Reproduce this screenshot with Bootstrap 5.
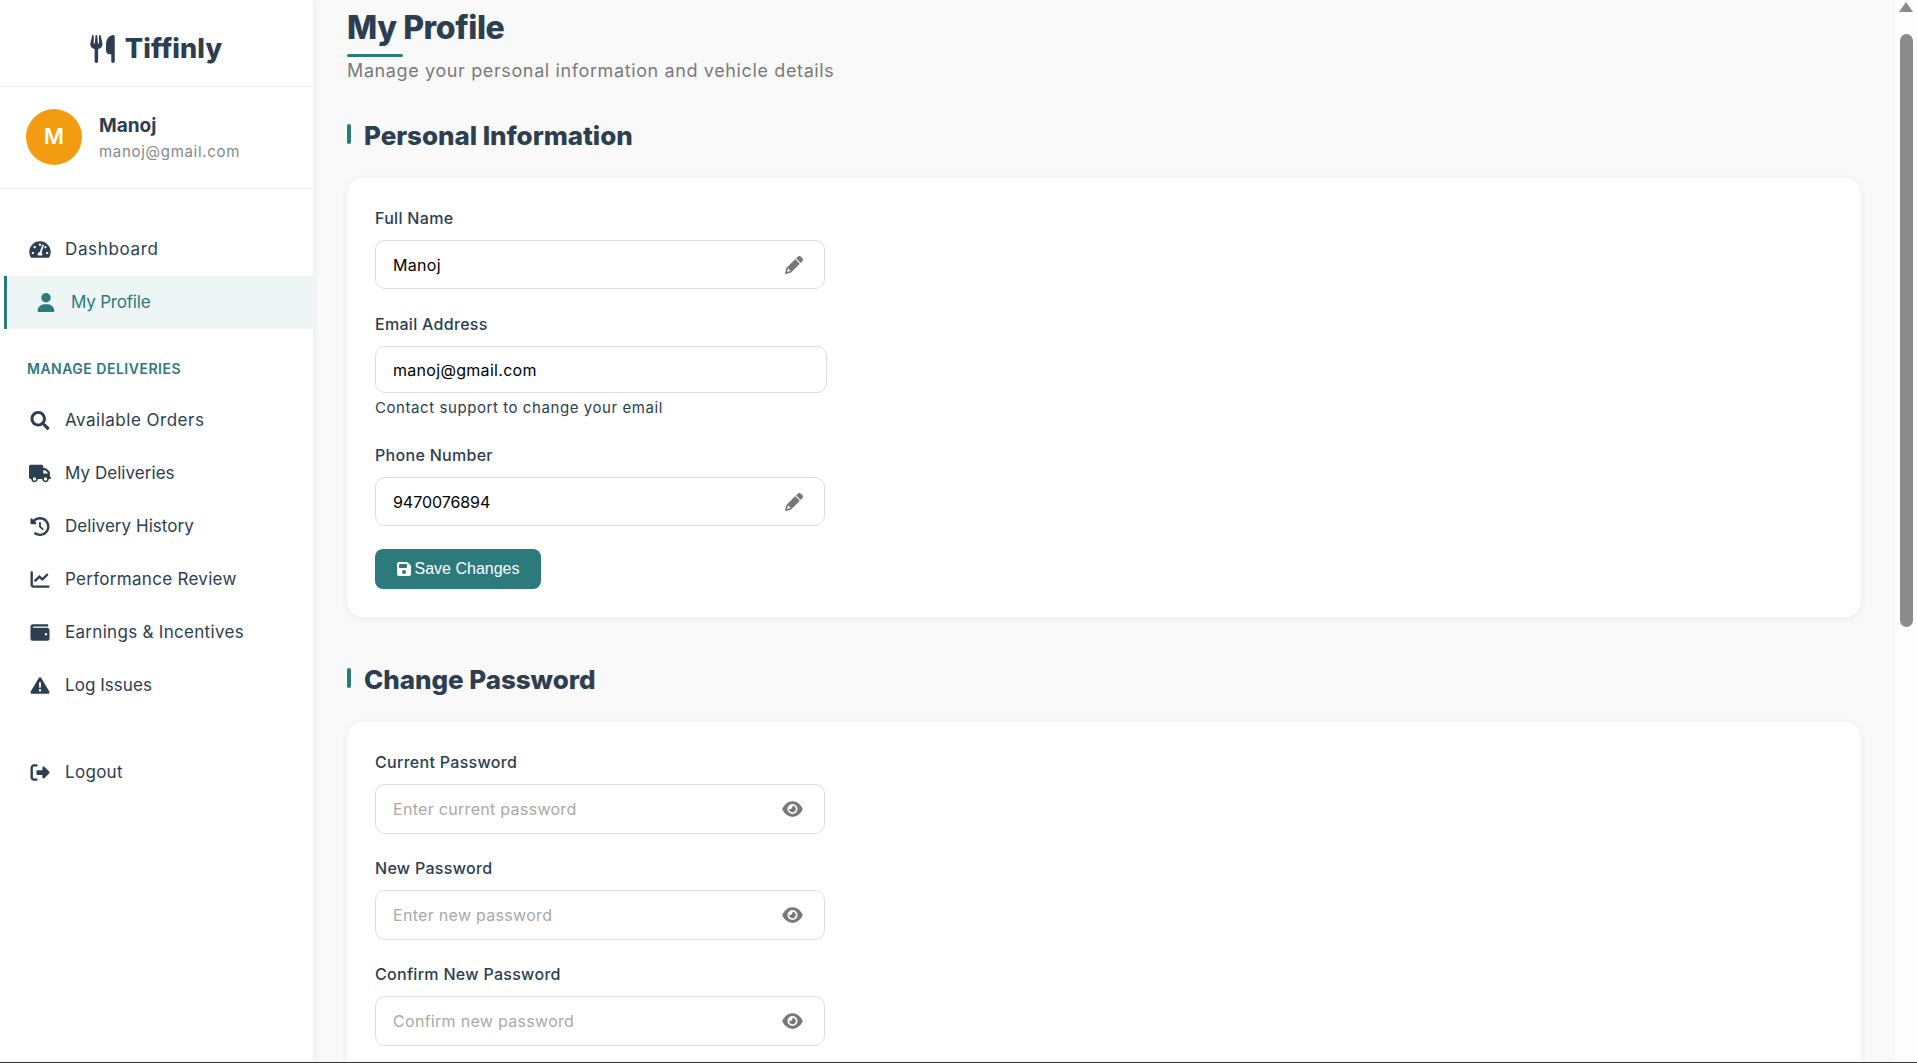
<!DOCTYPE html>
<html lang="en">

<head>
    <meta charset="UTF-8">
    <meta name="viewport" content="width=device-width, initial-scale=1.0">
    <title>My Profile - Tiffinly</title>
    <link rel="stylesheet" href="https://cdn.jsdelivr.net/npm/bootstrap@5.3.2/dist/css/bootstrap.min.css">
    <style>
        html, body { height: 100%; overflow: hidden; }
        body { font-family: Inter, "Open Sans", sans-serif; background: #f9f9f9; color: #2c3e50; }
        svg { fill: currentColor; display: block; }
        .app-shell { height: 1063px; border-bottom: 1px solid #333; overflow: hidden; }

        /* sidebar */
        .side-bar { width: 313px; flex: none; background: #fff; box-shadow: 2px 0 8px rgba(0, 0, 0, .05); position: relative; }
        .brand-row { height: 87px; border-bottom: 1px solid #eee; padding: 12px 1px 0 0; gap: 10px; }
        .brand-row svg { width: 25px; height: 28px; }
        .brand-name { font-size: 27px; font-weight: 800; letter-spacing: .1px; }
        .user-row { height: 102px; border-bottom: 1px solid #eee; padding-left: 26px; gap: 17px; }
        .user-pic { width: 56px; height: 56px; margin-top: -2px; background: #f39c12; font-size: 22px; font-weight: 600; }
        .user-info { margin-top: 2px; }
        .user-name { font-size: 19px; font-weight: 700; line-height: 26px; }
        .user-mail { font-size: 15px; line-height: 26px; color: #7f8c8d; letter-spacing: .7px; }
        .side-nav { padding-top: 34px; }
        .side-link { height: 53px; padding-left: 29px; color: #2c3e50; font-size: 17px; gap: 14px; letter-spacing: .3px; }
        .side-link svg { width: 22px; height: 19px; flex: none; }
        .side-link.is-on { margin-left: 4px; border-left: 3px solid #2c7a7b; background: #edf6f5; color: #2c7a7b; padding-left: 28px; letter-spacing: -.2px; }
        .side-link.sp-a { letter-spacing: .65px; }
        .side-link.sp-b { letter-spacing: .5px; }
        .side-link.sp-c { letter-spacing: .05px; }
        .side-head { margin: 29px 0 15px 27px; font-size: 14px; line-height: 21px; font-weight: 600; letter-spacing: .5px; color: #2c7a7b; text-transform: uppercase; }
        .side-out { margin-top: 34px; }

        /* main */
        .main-area { min-width: 0; padding: 4px 34px 0; }
        .page-title { font-size: 32px; line-height: 48px; font-weight: 800; margin: 0; letter-spacing: -.4px; }
        .title-rule { width: 56px; height: 3px; margin-top: 2px; background: #2c7a7b; border-radius: 2px; }
        .page-sub { font-size: 18px; line-height: 27px; color: #7a7a7a; margin: 0; letter-spacing: .62px; }
        .block-head { height: 38px; margin: 33px 0 23px; }
        .block-second { margin-top: 44px; }
        .block-bar { width: 4px; height: 20px; background: #2c7a7b; border-radius: 2px; margin: -4px 13px 0 0; }
        .block-title { font-size: 26px; font-weight: 800; margin: 0; letter-spacing: -.05px; }
        .form-panel { background: #fff; border: 0; border-radius: 16px; box-shadow: 0 2px 8px rgba(0, 0, 0, .06); padding: 28px; }
        .field-row { margin-bottom: 24px; }
        .field-row.first-row { margin-bottom: 23px; }
        .form-panel.pw-panel .field-row { margin-bottom: 22px; }
        .field-label { display: block; font-size: 16px; line-height: 24px; font-weight: 500; margin-bottom: 10px; letter-spacing: .3px; }
        .field-box { width: 450px; }
        .field-box.wide { width: 452px; }
        .form-control.field-input { height: 49px; padding: 0 44px 0 17px; font-size: 16px; color: #000; border: 1px solid #ddd; border-radius: 10px; letter-spacing: .3px; }
        .form-control.field-input.num-input { letter-spacing: -.06px; }
        .wide .form-control.field-input { height: 47px; }
        .pw-panel .form-control.field-input { height: 50px; }
        .form-control.field-input::placeholder { color: #a9a9a9; opacity: 1; }
        .field-icon { top: 50%; right: 22px; transform: translateY(-50%); color: #777; }
        .field-icon.pen { width: 18px; height: 18px; }
        .field-icon.see { width: 21px; height: 18px; }
        .field-note { font-size: 15px; line-height: 22px; margin-top: 4px; letter-spacing: .57px; }
        .btn.save-btn { height: 40px; width: 166px; padding: 0; margin-top: -1px; border: 0; border-radius: 8px; background: #2c7a7b; color: #fff; font-family: "Liberation Sans", Arial, sans-serif; font-size: 16px; gap: 4px; }
        .save-btn svg { width: 14px; height: 16px; }

        /* scrollbar drawn by hand, screenshots hide the real one */
        .scroll-col { width: 22px; flex: none; background: #fdfdfd; }
        .scroll-up { width: 0; height: 0; margin-top: 2px; border-left: 7.5px solid transparent; border-right: 7.5px solid transparent; border-bottom: 10px solid #8b8b8b; }
        .scroll-thumb { width: 13px; height: 593px; margin-top: 22px; margin-left: 1px; background: #8b8b8b; border-radius: 7px; }
    </style>
</head>

<body>
    <svg width="0" height="0" class="position-absolute">
        <symbol id="i-utensils" viewBox="0 0 448 512"><path d="M416 0C400 0 288 32 288 176V288c0 35.3 28.7 64 64 64h32V480c0 17.7 14.3 32 32 32s32-14.3 32-32V352 240 32c0-17.7-14.3-32-32-32zM64 16C64 7.8 57.9 1 49.7 .1S34.2 4.6 32.4 12.5L2.1 148.8C.7 155.1 0 161.5 0 167.9c0 45.9 35.1 83.6 80 87.7V480c0 17.7 14.3 32 32 32s32-14.3 32-32V255.6c44.9-4.1 80-41.8 80-87.7c0-6.4-.7-12.8-2.1-19.1L191.6 12.5c-1.8-8-9.3-13.3-17.4-12.4S160 7.8 160 16V150.2c0 5.4-4.4 9.8-9.8 9.8c-5.1 0-9.3-3.9-9.8-9L127.9 14.6C127.2 6.3 120.3 0 112 0s-15.2 6.3-15.9 14.6L83.7 151c-.5 5.1-4.7 9-9.8 9c-5.4 0-9.8-4.4-9.8-9.8V16zm48.3 152l-.3 0-.3 0 .3-.7 .3 .7z"/></symbol>
        <symbol id="i-gauge" viewBox="0 0 576 512"><path d="M288 32C128.94 32 0 160.94 0 320c0 52.8 14.25 102.26 39.06 144.8 5.61 9.62 16.3 15.2 27.44 15.2h443c11.14 0 21.83-5.58 27.44-15.2C561.75 422.26 576 372.8 576 320c0-159.06-128.94-288-288-288zm0 64c14.71 0 26.58 10.13 30.32 23.65-1.11 2.26-2.64 4.23-3.45 6.67l-9.22 27.67c-5.13 3.49-10.97 6.01-17.64 6.01-17.67 0-32-14.33-32-32S270.33 96 288 96zM96 384c-17.67 0-32-14.33-32-32s14.33-32 32-32 32 14.33 32 32-14.33 32-32 32zm48-160c-17.67 0-32-14.33-32-32s14.33-32 32-32 32 14.33 32 32-14.33 32-32 32zm246.77-72.41l-61.33 184C343.13 347.33 352 364.54 352 384c0 11.72-3.38 22.55-8.88 32H232.88c-5.5-9.45-8.88-20.28-8.88-32 0-33.94 26.5-61.43 59.9-63.59l61.34-184.01c4.17-12.56 17.73-19.45 30.36-15.17 12.57 4.19 19.35 17.79 15.17 30.36zm14.66 57.2l15.52-46.55c3.47-1.29 7.13-2.23 11.05-2.23 17.67 0 32 14.33 32 32s-14.33 32-32 32c-11.38-.01-20.89-6.28-26.57-15.22zM480 384c-17.67 0-32-14.33-32-32s14.33-32 32-32 32 14.33 32 32-14.33 32-32 32z"/></symbol>
        <symbol id="i-user" viewBox="0 0 448 512"><path d="M224 256A128 128 0 1 0 224 0a128 128 0 1 0 0 256zm-45.7 48C79.8 304 0 383.8 0 482.3C0 498.7 13.3 512 29.7 512H418.3c16.4 0 29.7-13.3 29.7-29.7C448 383.8 368.2 304 269.7 304H178.3z"/></symbol>
        <symbol id="i-search" viewBox="0 0 512 512"><path d="M505 442.7L405.3 343c-4.5-4.5-10.6-7-17-7H372c27.6-35.3 44-79.7 44-128C416 93.1 322.9 0 208 0S0 93.1 0 208s93.1 208 208 208c48.3 0 92.7-16.4 128-44v16.3c0 6.4 2.5 12.5 7 17l99.7 99.7c9.4 9.4 24.6 9.4 33.9 0l28.3-28.3c9.4-9.4 9.4-24.6.1-34zM208 336c-70.7 0-128-57.2-128-128 0-70.7 57.2-128 128-128 70.7 0 128 57.2 128 128 0 70.7-57.2 128-128 128z"/></symbol>
        <symbol id="i-truck" viewBox="0 0 640 512"><path d="M48 0C21.5 0 0 21.5 0 48V368c0 26.5 21.5 48 48 48H64c0 53 43 96 96 96s96-43 96-96H384c0 53 43 96 96 96s96-43 96-96h32c17.7 0 32-14.3 32-32s-14.3-32-32-32V288 256 237.3c0-17-6.7-33.3-18.7-45.3L512 114.7c-12-12-28.3-18.7-45.3-18.7H416V48c0-26.5-21.5-48-48-48H48zM416 160h50.7L544 237.3V256H416V160zM112 416a48 48 0 1 1 96 0 48 48 0 1 1 -96 0zm368-48a48 48 0 1 1 0 96 48 48 0 1 1 0-96z"/></symbol>
        <symbol id="i-history" viewBox="0 0 512 512"><path d="M75 75L41 41C25.9 25.9 0 36.6 0 57.9V168c0 13.3 10.7 24 24 24H134.1c21.4 0 32.1-25.9 17-41l-30.8-30.8C155 85.5 203 64 256 64c106 0 192 86 192 192s-86 192-192 192c-40.8 0-78.6-12.7-109.7-34.4c-14.5-10.1-34.4-6.6-44.6 7.9s-6.6 34.4 7.9 44.6C151.2 495 201.7 512 256 512c141.4 0 256-114.6 256-256S397.4 0 256 0C185.3 0 121.3 28.7 75 75zm181 53c-13.3 0-24 10.7-24 24V256c0 6.4 2.5 12.5 7 17l72 72c9.4 9.4 24.6 9.4 33.9 0s9.4-24.6 0-33.9l-65-65V152c0-13.3-10.7-24-24-24z"/></symbol>
        <symbol id="i-chart" viewBox="0 0 512 512"><path d="M64 64c0-17.7-14.3-32-32-32S0 46.3 0 64V400c0 44.2 35.8 80 80 80H480c17.7 0 32-14.3 32-32s-14.3-32-32-32H80c-8.8 0-16-7.2-16-16V64zm406.6 86.6c12.5-12.5 12.5-32.8 0-45.3s-32.8-12.5-45.3 0L320 210.7l-57.4-57.4c-12.5-12.5-32.8-12.5-45.3 0l-112 112c-12.5 12.5-12.5 32.8 0 45.3s32.8 12.5 45.3 0L240 221.3l57.4 57.4c12.5 12.5 32.8 12.5 45.3 0l128-128z"/></symbol>
        <symbol id="i-wallet" viewBox="0 0 512 512"><path d="M64 32C28.7 32 0 60.7 0 96V416c0 35.3 28.7 64 64 64H448c35.3 0 64-28.7 64-64V192c0-35.3-28.7-64-64-64H80c-8.8 0-16-7.2-16-16s7.2-16 16-16H448c17.7 0 32-14.3 32-32s-14.3-32-32-32H64zM416 272a32 32 0 1 1 0 64 32 32 0 1 1 0-64z"/></symbol>
        <symbol id="i-warn" viewBox="0 0 512 512"><path d="M256 32c14.2 0 27.3 7.5 34.5 19.8l216 368c7.3 12.4 7.3 27.7 .2 40.1S486.3 480 472 480H40c-14.3 0-27.6-7.7-34.7-20.1s-7-27.8 .2-40.1l216-368C228.7 39.5 241.8 32 256 32zm0 128c-13.3 0-24 10.7-24 24V296c0 13.3 10.7 24 24 24s24-10.7 24-24V184c0-13.3-10.7-24-24-24zm32 224a32 32 0 1 0 -64 0 32 32 0 1 0 64 0z"/></symbol>
        <symbol id="i-logout" viewBox="0 0 512 512"><path d="M377.9 105.9L500.7 228.7c7.2 7.2 11.3 17.1 11.3 27.3s-4.1 20.1-11.3 27.3L377.9 406.1c-6.4 6.4-15 9.9-24 9.9c-18.7 0-33.9-15.2-33.9-33.9l0-62.1-128 0c-17.7 0-32-14.3-32-32l0-64c0-17.7 14.3-32 32-32l128 0 0-62.1c0-18.7 15.2-33.9 33.9-33.9c9 0 17.6 3.6 24 9.9zM160 96L96 96c-17.7 0-32 14.3-32 32l0 256c0 17.7 14.3 32 32 32l64 0c17.7 0 32 14.3 32 32s-14.3 32-32 32l-64 0c-53 0-96-43-96-96L0 128C0 75 43 32 96 32l64 0c17.7 0 32 14.3 32 32s-14.3 32-32 32z"/></symbol>
        <symbol id="i-pen" viewBox="0 0 512 512"><path d="M410.3 231l11.3-11.3-33.9-33.9-62.1-62.1L291.7 89.8l-11.3 11.3-22.6 22.6L58.6 322.9c-10.4 10.4-18 23.3-22.2 37.4L1 480.7c-2.5 8.4-.2 17.5 6.1 23.7s15.3 8.5 23.7 6.1l120.3-35.4c14.1-4.2 27-11.8 37.4-22.2L387.7 253.7 410.3 231zM160 399.4l-9.1 22.7c-4 3.1-8.5 5.4-13.3 6.9L59.4 452l23-78.1c1.4-4.9 3.8-9.4 6.9-13.3l22.7-9.1v32c0 8.8 7.2 16 16 16h32zM362.7 18.7L348.3 33.2 325.7 55.8 314.3 67.1l33.9 33.9 62.1 62.1 33.9 33.9 11.3-11.3 22.6-22.6 14.5-14.5c25-25 25-65.5 0-90.5L453.3 18.7c-25-25-65.5-25-90.5 0z"/></symbol>
        <symbol id="i-eye" viewBox="0 0 576 512"><path d="M288 32c-80.8 0-145.5 36.8-192.6 80.6C48.6 156 17.3 208 2.5 243.7c-3.3 7.9-3.3 16.7 0 24.6C17.3 304 48.6 356 95.4 399.4C142.5 443.2 207.2 480 288 480s145.5-36.8 192.6-80.6c46.8-43.5 78.1-95.4 93-131.1c3.3-7.9 3.3-16.7 0-24.6c-14.9-35.7-46.2-87.7-93-131.1C433.5 68.8 368.8 32 288 32zM144 256a144 144 0 1 1 288 0 144 144 0 1 1 -288 0zm144-64c0 35.3-28.7 64-64 64c-7.1 0-13.9-1.2-20.3-3.3c-5.5-1.8-11.9 1.6-11.7 7.4c.3 6.9 1.3 13.8 3.2 20.7c13.7 51.2 66.4 81.6 117.6 67.9s81.6-66.4 67.9-117.6c-11.1-41.5-47.8-69.4-88.6-71.1c-5.8-.2-9.2 6.1-7.4 11.7c2.1 6.4 3.3 13.2 3.3 20.3z"/></symbol>
        <symbol id="i-save" viewBox="0 0 448 512"><path d="M64 32C28.7 32 0 60.7 0 96V416c0 35.3 28.7 64 64 64H384c35.3 0 64-28.7 64-64V173.3c0-17-6.7-33.3-18.7-45.3L352 50.7C340 38.7 323.7 32 306.7 32H64zm0 96c0-17.7 14.3-32 32-32H288c17.7 0 32 14.3 32 32v64c0 17.7-14.3 32-32 32H96c-17.7 0-32-14.3-32-32V128zM224 288a64 64 0 1 1 0 128 64 64 0 1 1 0-128z"/></symbol>
    </svg>

    <div class="app-shell d-flex">
        <aside class="side-bar">
            <div class="brand-row d-flex align-items-center justify-content-center">
                <svg><use href="#i-utensils"/></svg>
                <span class="brand-name">Tiffinly</span>
            </div>
            <div class="user-row d-flex align-items-center">
                <div class="user-pic rounded-circle text-white d-flex align-items-center justify-content-center">M</div>
                <div class="user-info">
                    <div class="user-name">Manoj</div>
                    <div class="user-mail">manoj@gmail.com</div>
                </div>
            </div>
            <nav class="side-nav nav flex-column">
                <a href="#" class="side-link sp-a nav-link d-flex align-items-center"><svg><use href="#i-gauge"/></svg>Dashboard</a>
                <a href="#" class="side-link is-on nav-link d-flex align-items-center"><svg><use href="#i-user"/></svg>My Profile</a>
                <div class="side-head">Manage Deliveries</div>
                <a href="#" class="side-link sp-b nav-link d-flex align-items-center"><svg><use href="#i-search"/></svg>Available Orders</a>
                <a href="#" class="side-link sp-c nav-link d-flex align-items-center"><svg><use href="#i-truck"/></svg>My Deliveries</a>
                <a href="#" class="side-link sp-c nav-link d-flex align-items-center"><svg><use href="#i-history"/></svg>Delivery History</a>
                <a href="#" class="side-link nav-link d-flex align-items-center"><svg><use href="#i-chart"/></svg>Performance Review</a>
                <a href="#" class="side-link nav-link d-flex align-items-center"><svg><use href="#i-wallet"/></svg>Earnings &amp; Incentives</a>
                <a href="#" class="side-link sp-c nav-link d-flex align-items-center"><svg><use href="#i-warn"/></svg>Log Issues</a>
                <a href="#" class="side-link side-out nav-link d-flex align-items-center"><svg><use href="#i-logout"/></svg>Logout</a>
            </nav>
        </aside>

        <main class="main-area flex-grow-1">
            <h1 class="page-title">My Profile</h1>
            <div class="title-rule"></div>
            <p class="page-sub">Manage your personal information and vehicle details</p>

            <div class="block-head d-flex align-items-center">
                <span class="block-bar"></span>
                <h2 class="block-title">Personal Information</h2>
            </div>
            <div class="form-panel card">
                <div class="field-row first-row">
                    <label class="field-label">Full Name</label>
                    <div class="field-box position-relative">
                        <input type="text" class="form-control field-input" value="Manoj">
                        <svg class="field-icon pen position-absolute"><use href="#i-pen"/></svg>
                    </div>
                </div>
                <div class="field-row">
                    <label class="field-label">Email Address</label>
                    <div class="field-box wide">
                        <input type="email" class="form-control field-input" value="manoj@gmail.com">
                    </div>
                    <div class="field-note">Contact support to change your email</div>
                </div>
                <div class="field-row">
                    <label class="field-label">Phone Number</label>
                    <div class="field-box position-relative">
                        <input type="text" class="form-control field-input num-input" value="9470076894">
                        <svg class="field-icon pen position-absolute"><use href="#i-pen"/></svg>
                    </div>
                </div>
                <div>
                    <button type="button" class="save-btn btn d-inline-flex align-items-center justify-content-center">
                        <svg><use href="#i-save"/></svg>Save Changes
                    </button>
                </div>
            </div>

            <div class="block-head block-second d-flex align-items-center">
                <span class="block-bar"></span>
                <h2 class="block-title">Change Password</h2>
            </div>
            <div class="form-panel pw-panel card">
                <div class="field-row">
                    <label class="field-label">Current Password</label>
                    <div class="field-box position-relative">
                        <input type="password" class="form-control field-input" placeholder="Enter current password">
                        <svg class="field-icon see position-absolute"><use href="#i-eye"/></svg>
                    </div>
                </div>
                <div class="field-row">
                    <label class="field-label">New Password</label>
                    <div class="field-box position-relative">
                        <input type="password" class="form-control field-input" placeholder="Enter new password">
                        <svg class="field-icon see position-absolute"><use href="#i-eye"/></svg>
                    </div>
                </div>
                <div class="field-row">
                    <label class="field-label">Confirm New Password</label>
                    <div class="field-box position-relative">
                        <input type="password" class="form-control field-input" placeholder="Confirm new password">
                        <svg class="field-icon see position-absolute"><use href="#i-eye"/></svg>
                    </div>
                </div>
            </div>
        </main>

        <div class="scroll-col d-flex flex-column align-items-center">
            <div class="scroll-up"></div>
            <div class="scroll-thumb"></div>
        </div>
    </div>

    <script src="https://cdn.jsdelivr.net/npm/bootstrap@5.3.2/dist/js/bootstrap.bundle.min.js"></script>
</body>

</html>
